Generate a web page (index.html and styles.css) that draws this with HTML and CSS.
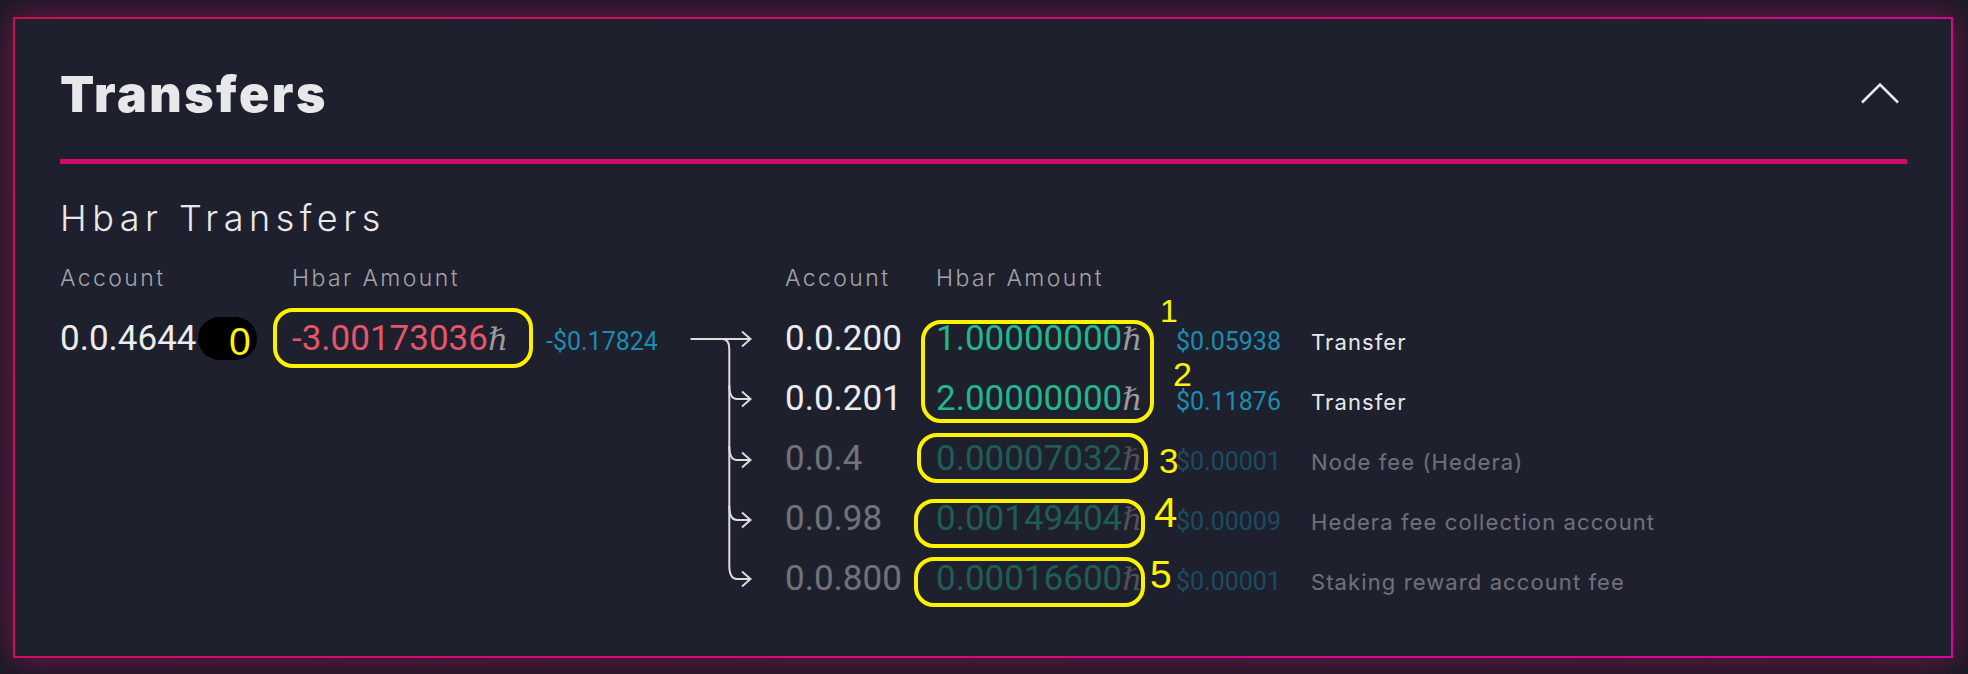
FILE: index.html
```html
<!DOCTYPE html>
<html lang="en">
<head>
<meta charset="utf-8">
<title>Transfers</title>
<link rel="stylesheet" href="styles.css">
</head>
<body>
<section class="card">
  <header class="card-head">
    <h1 class="title">Transfers</h1>
    <svg class="chevron" width="40" height="22" viewBox="0 0 40 22" aria-hidden="true">
      <path d="M2 20.5 L20 2.5 L38 20.5" fill="none" stroke="#e8e8ea" stroke-width="2.6"/>
    </svg>
  </header>
  <div class="rule"></div>
  <h2 class="subtitle">Hbar Transfers</h2>

  <div class="transfers">
    <div class="side from">
      <div class="heads"><span>Account</span><span>Hbar Amount</span><span></span></div>
      <div class="row">
        <span class="acc">0.0.4644</span>
        <span class="amt neg">-3.00173036<i class="hbar">ℏ</i></span>
        <span class="usd">-$0.17824</span>
      </div>
    </div>

    <div class="flow">
      <svg width="95" height="300" viewBox="0 0 95 300" aria-hidden="true">
        <g fill="none" stroke="#dcdcde" stroke-width="2">
          <path d="M0.5 30 H60.5"/>
          <path d="M32 30 Q39.3 30 39.3 40 V256 Q39.3 270 47 270 H60.5"/>
          <path d="M39.3 76 Q39.3 90 47 90 H60.5"/>
          <path d="M39.3 137 Q39.3 151 47 151 H60.5"/>
          <path d="M39.3 197 Q39.3 211 47 211 H60.5"/>
          <path d="M52 22.5 L60.5 30 L52 37.5"/>
          <path d="M52 82.5 L60.5 90 L52 97.5"/>
          <path d="M52 143.5 L60.5 151 L52 158.5"/>
          <path d="M52 203.5 L60.5 211 L52 218.5"/>
          <path d="M52 262.5 L60.5 270 L52 277.5"/>
        </g>
      </svg>
    </div>

    <div class="side to">
      <div class="heads"><span>Account</span><span>Hbar Amount</span><span></span><span></span></div>
      <div class="row">
        <span class="acc">0.0.200</span>
        <span class="amt pos">1.00000000<i class="hbar">ℏ</i></span>
        <span class="usd">$0.05938</span>
        <span class="desc">Transfer</span>
      </div>
      <div class="row">
        <span class="acc">0.0.201</span>
        <span class="amt pos">2.00000000<i class="hbar">ℏ</i></span>
        <span class="usd">$0.11876</span>
        <span class="desc">Transfer</span>
      </div>
      <div class="row fee">
        <span class="acc">0.0.4</span>
        <span class="amt pos">0.00007032<i class="hbar">ℏ</i></span>
        <span class="usd">$0.00001</span>
        <span class="desc">Node fee (Hedera)</span>
      </div>
      <div class="row fee">
        <span class="acc">0.0.98</span>
        <span class="amt pos">0.00149404<i class="hbar">ℏ</i></span>
        <span class="usd">$0.00009</span>
        <span class="desc">Hedera fee collection account</span>
      </div>
      <div class="row fee">
        <span class="acc">0.0.800</span>
        <span class="amt pos">0.00016600<i class="hbar">ℏ</i></span>
        <span class="usd">$0.00001</span>
        <span class="desc">Staking reward account fee</span>
      </div>
    </div>
  </div>

  <div class="note pill"><span class="pill-num">0</span></div>
  <div class="note box b0"></div>
  <div class="note box b12"></div>
  <div class="note box b3"></div>
  <div class="note box b4"></div>
  <div class="note box b5"></div>
  <span class="note num n1">1</span>
  <span class="note num n2">2</span>
  <span class="note num n3">3</span>
  <span class="note num n4">4</span>
  <span class="note num n5">5</span>
</section>
</body>
</html>
```

FILE: styles.css
```css
* { box-sizing: border-box; }

html, body {
  margin: 0;
  padding: 0;
}

body {
  width: 1968px;
  height: 674px;
  overflow: hidden;
  background: #1b1a25;
  padding: 17px 15px 16px 13px;
  font-family: Inter, "Noto Sans", sans-serif;
  color: #e8e8ea;
}

.card {
  position: relative;
  height: 641px;
  background: #1e202d;
  border: 2px solid #cc0f6e;
  border-image: linear-gradient(135deg, #c8124f, #d4089e) 1;
  box-shadow: 0 0 30px rgba(200, 16, 110, 0.56);
  padding: 50px 44px 0 45px;
}

.card-head {
  display: flex;
  justify-content: space-between;
  align-items: flex-start;
  height: 50px;
}

.title {
  margin: 0;
  font: 900 50px/50px Inter, sans-serif;
  letter-spacing: 2.5px;
  color: #e8e8ea;
}

.chevron {
  display: block;
  margin: 13px 7px 0 0;
}

.rule {
  height: 5px;
  margin-top: 40px;
  background: #d00a6e;
}

.subtitle {
  margin: 36px 0 0;
  font: 300 36px/36px Inter, sans-serif;
  letter-spacing: 5.5px;
  color: #e8e8ea;
}

.transfers {
  display: flex;
  margin-top: 31px;
}

.side {
  display: flex;
  flex-direction: column;
}

.heads {
  display: grid;
  height: 23px;
  margin-bottom: 19px;
  font: 300 23px/23px Inter, sans-serif;
  letter-spacing: 2.4px;
  color: #a3a4ab;
  white-space: nowrap;
}

.row {
  display: grid;
  height: 60px;
  align-items: baseline;
}

.from .heads, .from .row { grid-template-columns: 232px 254px 144px; }
.to .heads, .to .row { grid-template-columns: 151px 240px 135px 320px; }

.acc {
  font: 400 35px/60px Roboto, sans-serif;
  color: #ececee;
  white-space: nowrap;
}

.amt {
  font: 400 35px/60px Roboto, sans-serif;
  white-space: nowrap;
}

.neg { color: #e5566a; }
.pos { color: #22b68d; }

.hbar {
  font: italic 400 31px "DejaVu Serif", "Liberation Serif", serif;
  color: #9b9b9f;
}

.usd {
  font: 400 25px/60px Roboto, sans-serif;
  color: #1b8db0;
  white-space: nowrap;
}

.desc {
  font: 400 22px/60px Inter, sans-serif;
  letter-spacing: 1.1px;
  color: #e8e8ea;
  white-space: nowrap;
}

.fee { opacity: 0.4; }

.flow {
  width: 95px;
  padding-top: 42px;
}

.flow svg { display: block; }

/* annotation overlays */
.note { position: absolute; }

.pill {
  left: 183px;
  top: 298px;
  width: 59px;
  height: 43px;
  border-radius: 22px;
  background: #000;
}

.pill-num {
  position: absolute;
  left: 31px;
  top: 5px;
  font: 400 39px/39px "Liberation Sans", Arial, sans-serif;
  color: #fff200;
}

.box {
  border: 4px solid #fff200;
  border-radius: 20px;
}

.b0 { left: 258px; top: 289px; width: 260px; height: 60px; }
.b12 { left: 906px; top: 301px; width: 233px; height: 103px; }
.b3 { left: 902px; top: 414px; width: 231px; height: 50px; }
.b4 { left: 899px; top: 480px; width: 231px; height: 49px; }
.b5 { left: 899px; top: 538px; width: 231px; height: 50px; }

.num {
  font-family: "Liberation Sans", Arial, sans-serif;
  font-weight: 400;
  color: #fff200;
}

.n1 { left: 1145px; top: 276px; font-size: 32px; line-height: 32px; }
.n2 { left: 1158px; top: 338px; font-size: 34px; line-height: 34px; }
.n3 { left: 1144px; top: 424px; font-size: 35px; line-height: 35px; }
.n4 { left: 1139px; top: 473px; font-size: 42px; line-height: 42px; }
.n5 { left: 1135px; top: 536px; font-size: 39px; line-height: 39px; }
```
